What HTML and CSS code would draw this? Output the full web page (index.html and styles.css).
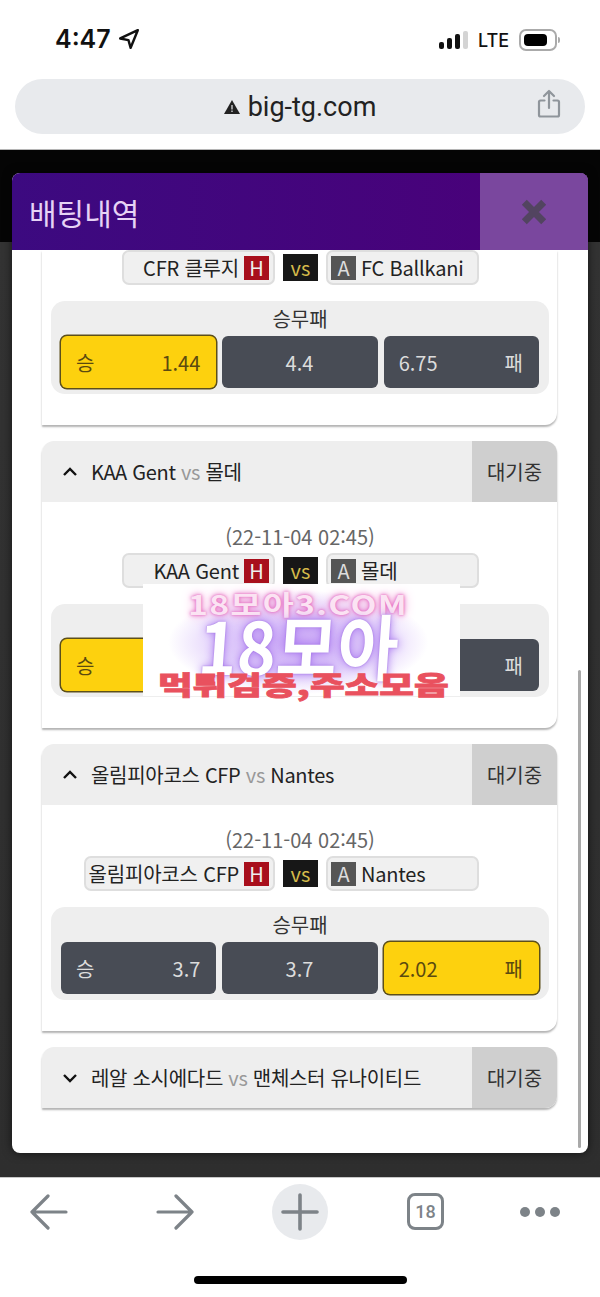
FILE: index.html
```html
<!DOCTYPE html>
<html lang="ko">
<head>
  <meta charset="UTF-8">
  <meta name="viewport" content="width=device-width, initial-scale=1.0">
  <title>배팅내역</title>
  <link rel="stylesheet" href="styles.css">
</head>
<body>
  <div class="status-bar">
    <div class="clock">
      <span>4:47</span>
      <svg class="locate" width="22" height="22" viewBox="0 0 20 20"><path d="M18 2 2 9.500l7.500 1.500 2 7z" fill="none" stroke="#111" stroke-width="2.200" stroke-linejoin="round"/></svg>
    </div>
    <div class="status-right">
      <div class="signal"><i></i><i></i><i></i><i class="off"></i></div>
      <span class="lte">LTE</span>
      <div class="battery"><div class="battery-fill"></div></div>
      <div class="battery-cap"></div>
    </div>
  </div>

  <div class="url-wrap">
    <div class="url-bar">
      <svg width="16" height="14" viewBox="0 0 16 14"><path d="M8 0 16 14H0z" fill="#222"/><path d="M8 5v4.500M8 10.500v1.500" stroke="#e8eaed" stroke-width="1.200"/></svg>
      <span class="url-text">big-tg.com</span>
      <svg class="share" width="24" height="30" viewBox="0 0 24 30" fill="none" stroke="#8f959b" stroke-width="2.200" stroke-linecap="round" stroke-linejoin="round"><path d="M7.500 11.500H3.500a1.500 1.500 0 0 0-1.500 1.500v13a1.500 1.500 0 0 0 1.500 1.500h17a1.500 1.500 0 0 0 1.500-1.500V13a1.500 1.500 0 0 0-1.500-1.500h-4"/><path d="M12 19V2M7 7l5-5 5 5"/></svg>
    </div>
  </div>

  <div class="backdrop">
    <div class="modal">
      <div class="modal-head">
        <div class="modal-title">배팅내역</div>
        <div class="modal-close">
          <svg width="28" height="28" viewBox="0 0 26 26"><path d="M4 4l18 18M22 4 4 22" stroke="#524460" stroke-width="6.500"/></svg>
        </div>
      </div>
      <div class="modal-body">
        <div class="card card-cut">
          <div class="card-main">
            <div class="teams">
              <div class="team home">CFR 클루지 <b class="tag tag-h">H</b></div>
              <div class="vs-box">vs</div>
              <div class="team away"><b class="tag tag-a">A</b> FC Ballkani</div>
            </div>
            <div class="odds">
              <div class="odds-title">승무패</div>
              <div class="odds-row">
                <div class="odd picked"><span>승</span><span>1.44</span></div>
                <div class="odd mid"><span>4.4</span></div>
                <div class="odd"><span>6.75</span><span>패</span></div>
              </div>
            </div>
          </div>
        </div>

        <div class="card">
          <div class="card-head">
            <div class="card-name">
              <svg class="chevron" width="16" height="10" viewBox="0 0 16 10"><path d="M2 8l6-6 6 6" fill="none" stroke="#111" stroke-width="2.400"/></svg>
              <span>KAA Gent <em>vs</em> 몰데</span>
            </div>
            <div class="card-state">대기중</div>
          </div>
          <div class="card-main">
            <div class="match-date">(22-11-04 02:45)</div>
            <div class="teams">
              <div class="team home">KAA Gent <b class="tag tag-h">H</b></div>
              <div class="vs-box">vs</div>
              <div class="team away"><b class="tag tag-a">A</b> 몰데</div>
            </div>
            <div class="odds">
              <div class="odds-title"></div>
              <div class="odds-row">
                <div class="odd picked"><span>승</span></div>
                <div class="odd mid"></div>
                <div class="odd end"><span>패</span></div>
              </div>
            </div>
          </div>
        </div>

        <div class="card">
          <div class="card-head">
            <div class="card-name">
              <svg class="chevron" width="16" height="10" viewBox="0 0 16 10"><path d="M2 8l6-6 6 6" fill="none" stroke="#111" stroke-width="2.400"/></svg>
              <span>올림피아코스 CFP <em>vs</em> Nantes</span>
            </div>
            <div class="card-state">대기중</div>
          </div>
          <div class="card-main">
            <div class="match-date">(22-11-04 02:45)</div>
            <div class="teams">
              <div class="team home">올림피아코스 CFP <b class="tag tag-h">H</b></div>
              <div class="vs-box">vs</div>
              <div class="team away"><b class="tag tag-a">A</b> Nantes</div>
            </div>
            <div class="odds">
              <div class="odds-title">승무패</div>
              <div class="odds-row">
                <div class="odd"><span>승</span><span>3.7</span></div>
                <div class="odd mid"><span>3.7</span></div>
                <div class="odd picked"><span>2.02</span><span>패</span></div>
              </div>
            </div>
          </div>
        </div>

        <div class="card">
          <div class="card-head closed">
            <div class="card-name">
              <svg class="chevron" width="16" height="10" viewBox="0 0 16 10"><path d="M2 2l6 6 6-6" fill="none" stroke="#111" stroke-width="2.400"/></svg>
              <span>레알 소시에다드 <em>vs</em> 맨체스터 유나이티드</span>
            </div>
            <div class="card-state">대기중</div>
          </div>
        </div>

        <div class="scrollbar"></div>
      </div>
    </div>

    <div class="ad">
      <div class="ad-url">18모아3.COM</div>
      <div class="ad-logo">18모아</div>
      <div class="ad-slogan">먹튀검증,주소모음</div>
    </div>
  </div>

  <div class="toolbar">
    <svg width="38" height="36" viewBox="0 0 38 36" fill="none" stroke="#7d8388" stroke-width="3.200" stroke-linecap="round" stroke-linejoin="round"><path d="M36 18H2M18 2 2 18l16 16"/></svg>
    <svg width="38" height="36" viewBox="0 0 38 36" fill="none" stroke="#7d8388" stroke-width="3.200" stroke-linecap="round" stroke-linejoin="round"><path d="M2 18h34M20 2l16 16-16 16"/></svg>
    <div class="new-tab">
      <svg width="38" height="38" viewBox="0 0 38 38" fill="none" stroke="#7d8388" stroke-width="3.600" stroke-linecap="round"><path d="M19 2v34M2 19h34"/></svg>
    </div>
    <div class="tabs">18</div>
    <div class="dots"><i></i><i></i><i></i></div>
  </div>
  <div class="home-area"><div class="home-bar"></div></div>
</body>
</html>
```

FILE: styles.css
```css
body {
  margin: 0;
  width: 600px;
  height: 1297px;
  overflow: hidden;
  background: #fff;
  color: #222;
  font-family: "Noto Sans CJK KR", "Noto Sans", sans-serif;
}

/* status bar */
.status-bar {
  height: 79px;
  box-sizing: border-box;
  padding: 24px 40px 0 55px;
  display: flex;
  justify-content: space-between;
  align-items: flex-start;
}
.clock {
  display: flex;
  align-items: center;
  gap: 7px;
  font-family: Inter, sans-serif;
  font-size: 25px;
  font-weight: 600;
  line-height: 30px;
  color: #111;
}
.status-right {
  display: flex;
  align-items: center;
  height: 32px;
}
.signal {
  display: flex;
  align-items: flex-end;
  gap: 3px;
  height: 18px;
  margin-right: 10px;
}
.signal i {
  display: block;
  width: 5px;
  height: 7px;
  border-radius: 2px;
  background: #111;
}
.signal i:nth-child(2) { height: 11px; }
.signal i:nth-child(3) { height: 15px; }
.signal i:nth-child(4) { height: 18px; }
.signal i.off { background: #d4d4d4; }
.lte {
  font-family: Inter, sans-serif;
  font-size: 18px;
  font-weight: 500;
  color: #111;
  margin-right: 10px;
}
.battery {
  width: 38px;
  height: 22px;
  box-sizing: border-box;
  padding: 3px;
  border: 2px solid #aaa;
  border-radius: 7px;
}
.battery-fill {
  width: 23px;
  height: 100%;
  background: #000;
  border-radius: 4px;
}
.battery-cap {
  width: 2px;
  height: 6px;
  margin-left: 1px;
  background: #aaa;
  border-radius: 0 2px 2px 0;
}

/* url bar */
.url-wrap {
  height: 71px;
  box-sizing: border-box;
  padding: 0 15px;
  border-bottom: 1px solid #b5b5b5;
}
.url-bar {
  height: 55px;
  background: #e8eaed;
  border-radius: 28px;
  display: flex;
  justify-content: center;
  align-items: center;
  gap: 8px;
  position: relative;
}
.url-text {
  font-family: Roboto, sans-serif;
  font-size: 27px;
  color: #222;
}
.share {
  position: absolute;
  right: 24px;
  top: 10px;
}

/* page behind the popup */
.backdrop {
  height: 1027px;
  box-sizing: border-box;
  padding: 23px 12px 0;
  position: relative;
  background: linear-gradient(#050505 0, #050505 92px, #333 92px, #2e2e2e 100%);
}
.modal {
  height: 980px;
  background: #fff;
  border-radius: 8px;
  overflow: hidden;
  box-shadow: 0 0 10px rgba(0, 0, 0, 0.6);
}
.modal-head {
  height: 77px;
  display: flex;
  justify-content: space-between;
  background: linear-gradient(90deg, #3c0a80 0%, #4b0079 100%);
}
.modal-title {
  padding-left: 17px;
  font-size: 30px;
  line-height: 78px;
  color: #e6d3f5;
}
.modal-close {
  width: 108px;
  background: #7a479e;
  display: flex;
  justify-content: center;
  align-items: center;
}
.modal-body {
  position: relative;
  height: 903px;
  box-sizing: border-box;
  padding-left: 30px;
  width: 576px;
}
.scrollbar {
  position: absolute;
  right: 7px;
  top: 420px;
  width: 3px;
  height: 478px;
  background: #a9a9a9;
  border-radius: 2px;
}

/* bet cards */
.card {
  width: 515px;
  margin-bottom: 16px;
  background: #fff;
  border-radius: 12px 12px 12px 0;
  box-shadow: 0 2px 2px #b4b4b4;
  overflow: hidden;
}
.card-cut {
  height: 175px;
  margin-bottom: 16px;
  border-radius: 0 0 12px 0;
}
.card-cut .card-main {
  padding-top: 0;
}
.card-head {
  height: 61px;
  display: flex;
  justify-content: space-between;
  background: #eee;
}
.card-name {
  display: flex;
  align-items: center;
  gap: 13px;
  padding-left: 20px;
  font-size: 20px;
  letter-spacing: -0.3px;
  color: #222;
}
.card-name em {
  font-style: normal;
  color: #999;
}
.card-state {
  width: 85px;
  background: #cfcfcf;
  font-size: 20px;
  line-height: 61px;
  text-align: center;
  color: #333;
}
.card-main {
  padding: 23px 8px 31px 9px;
}
.match-date {
  height: 28px;
  font-size: 20px;
  line-height: 24px;
  text-align: center;
  color: #666;
}
.teams {
  display: grid;
  grid-template-columns: 1fr 35px 1fr;
  column-gap: 8px;
  align-items: center;
  height: 35px;
  margin-left: -9px;
  margin-right: -8px;
  padding: 0 78px 0 80px;
  width: 515px;
  box-sizing: border-box;
}
.team {
  box-sizing: border-box;
  height: 35px;
  min-width: 153px;
  padding: 0 4px 0 3px;
  display: flex;
  align-items: center;
  gap: 5px;
  background: #f0f0f0;
  border: 2px solid #dedede;
  border-radius: 7px;
  font-size: 20px;
  line-height: 24px;
  letter-spacing: -0.2px;
  color: #222;
  white-space: nowrap;
}
.home {
  justify-self: end;
  justify-content: flex-end;
}
.away {
  justify-self: start;
}
.tag {
  flex: none;
  width: 25px;
  height: 24px;
  font-weight: 400;
  font-size: 20px;
  line-height: 24px;
  text-align: center;
}
.tag-h {
  background: #a80f1c;
  color: #eee;
}
.tag-a {
  background: #555;
  color: #ddd;
}
.vs-box {
  height: 27px;
  background: #171717;
  color: #d4b94a;
  font-size: 20px;
  line-height: 27px;
  text-align: center;
}
.odds {
  margin-top: 16px;
  height: 93px;
  box-sizing: border-box;
  background: #eee;
  border-radius: 14px;
  padding: 0 10px;
}
.odds-title {
  height: 35px;
  font-size: 20px;
  line-height: 35px;
  text-align: center;
  color: #333;
}
.odds-row {
  display: grid;
  grid-template-columns: repeat(3, 1fr);
  gap: 6px;
}
.odd {
  height: 52px;
  box-sizing: border-box;
  padding: 0 16px 0 15px;
  display: flex;
  justify-content: space-between;
  align-items: center;
  background: #484c55;
  border-radius: 6px;
  font-size: 20px;
  color: #dcdcdc;
}
.odd.mid {
  justify-content: center;
}
.odd.end {
  justify-content: flex-end;
}
.odd.picked {
  background: #fdd10e;
  color: #5b4a10;
  box-shadow: 0 0 0 1.500px #5c4f1a;
}

/* ad banner over the page */
.ad {
  position: absolute;
  left: 143px;
  top: 434px;
  width: 317px;
  height: 112px;
  background: radial-gradient(ellipse 130px 52px at 49% 52%, #c8a4f6 0%, #e2d0fb 60%, #fff 100%);
  display: flex;
  flex-direction: column;
  align-items: center;
  font-weight: 700;
}
.ad-url {
  height: 32px;
  margin-right: 8px;
  font-size: 27px;
  line-height: 40px;
  letter-spacing: 1px;
  color: #fbe3f3;
  transform: scaleX(1.25);
  text-shadow: 0 0 2px #e56cc0, 0 0 5px #e56cc0, 0 0 10px #f3a6dc;
}
.ad-logo {
  height: 56px;
  margin-right: 6px;
  font-size: 72px;
  line-height: 56px;
  color: #fff;
  transform: skewX(-4deg) scaleX(0.92);
  text-shadow: 0 0 2px #9a6ae0, 0 0 10px #a877ee;
}
.ad-slogan {
  height: 24px;
  margin-left: 3px;
  font-size: 26px;
  font-weight: 900;
  line-height: 24px;
  color: #e9515e;
  white-space: nowrap;
  transform: scaleX(1.45);
  -webkit-text-stroke: 0.8px #e9515e;
}

/* bottom toolbar */
.toolbar {
  height: 68px;
  border-top: 1px solid #c8c8c8;
  box-sizing: border-box;
  display: grid;
  grid-template-columns: 98px 154px 96px 155px 74px;
  align-items: center;
  justify-items: center;
  background: #fff;
}
.new-tab {
  width: 56px;
  height: 56px;
  background: #e8eaed;
  border-radius: 50%;
  display: flex;
  justify-content: center;
  align-items: center;
}
.tabs {
  width: 37px;
  height: 37px;
  box-sizing: border-box;
  border: 3px solid #7d8388;
  border-radius: 8px;
  font-family: Roboto, sans-serif;
  font-size: 18px;
  font-weight: 500;
  line-height: 31px;
  text-align: center;
  color: #7d8388;
}
.dots {
  display: flex;
  gap: 5px;
}
.dots i {
  width: 10px;
  height: 10px;
  background: #7d8388;
  border-radius: 50%;
}
.home-area {
  height: 52px;
  display: flex;
  justify-content: center;
  padding-top: 31px;
  box-sizing: border-box;
}
.home-bar {
  width: 213px;
  height: 8px;
  background: #000;
  border-radius: 4px;
}
```
